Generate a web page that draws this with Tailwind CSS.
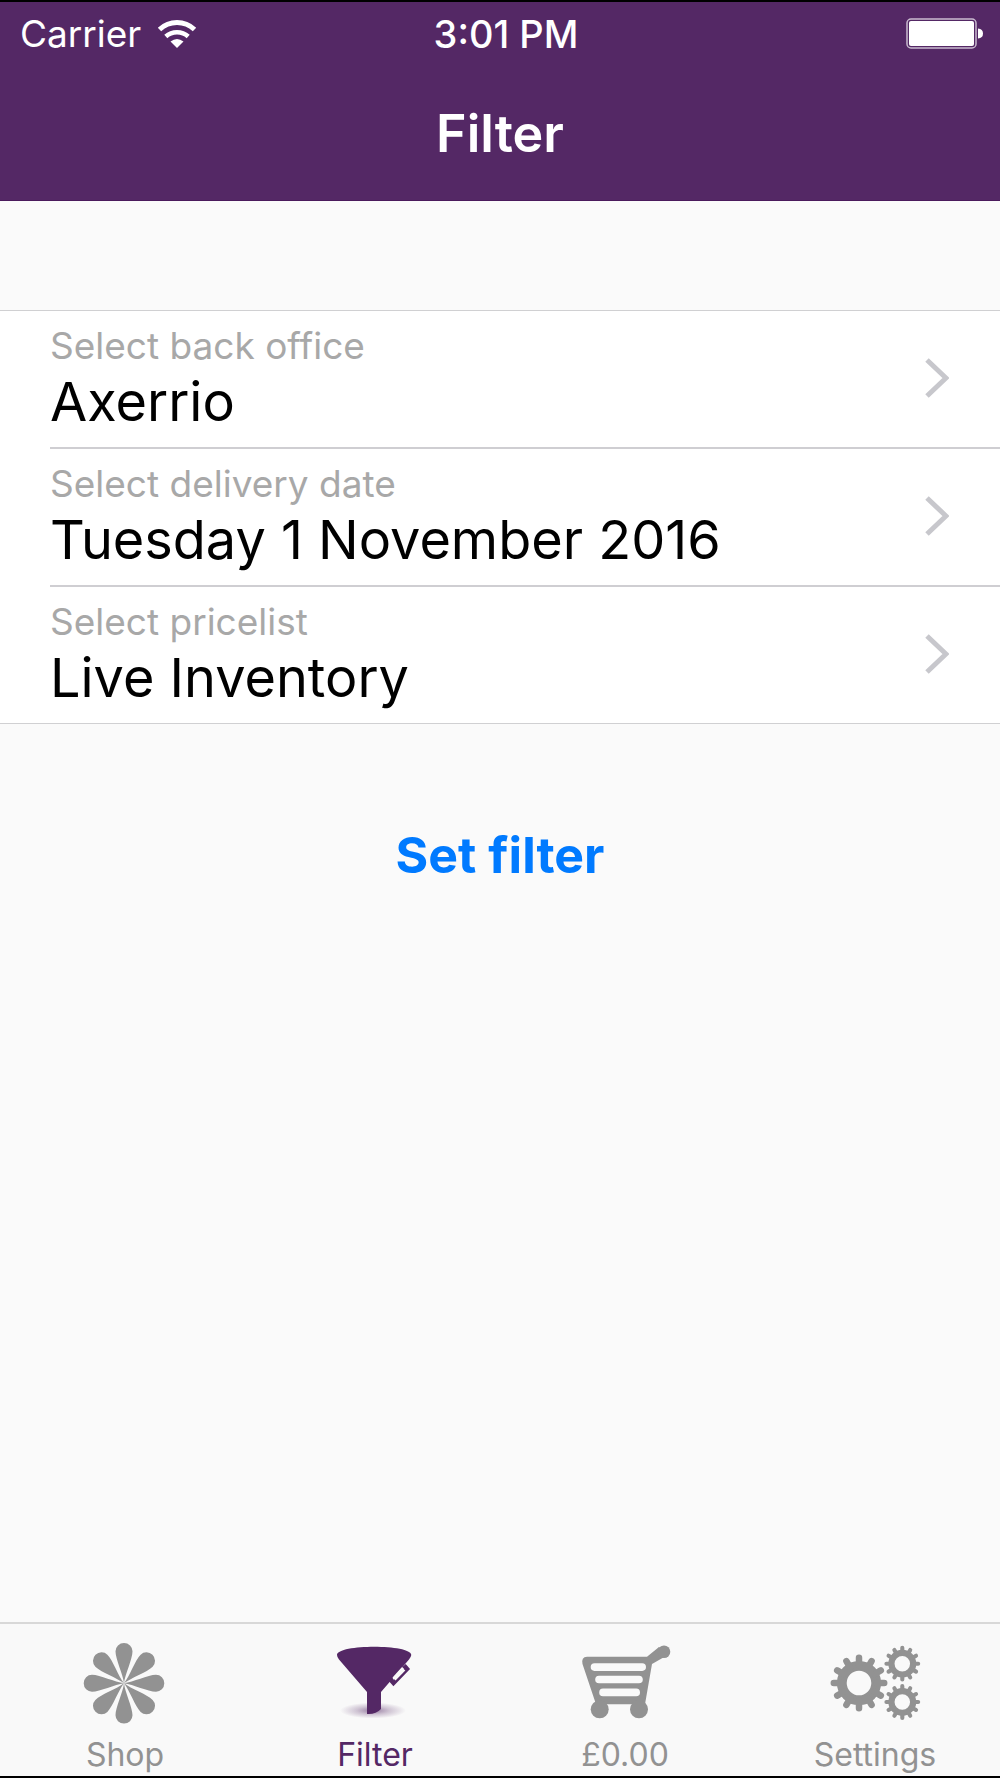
<!DOCTYPE html>
<html lang="en">
<head>
<meta charset="utf-8">
<meta name="viewport" content="width=device-width, initial-scale=1">
<title>Filter</title>
<script src="https://cdn.jsdelivr.net/npm/@tailwindcss/browser@4"></script>
</head>
<body class="flex min-h-screen flex-col border-y-2 border-black bg-[#fafafa] font-['Inter',sans-serif] text-black">
  <header class="border-b border-[#4a1a5c] bg-[#542865] text-white">
    <div class="grid h-16 grid-cols-3 items-center pl-5 pr-4">
      <div class="flex items-center gap-4">
        <span class="text-[37px] leading-10">Carrier</span>
        <svg class="h-[30px] w-10" viewBox="0 0 40 30" fill="none" stroke="white" stroke-width="5" aria-label="Wi-Fi">
          <path d="M2.5 10.5Q10 3.500 20 3.500T37.500 10.500"/>
          <path d="M8.800 17.500Q13.500 13.200 20 13.200T31.200 17.500" stroke-width="4.500"/>
          <path d="M13.500 22.500Q20 17.500 26.500 22.500L20 29Z" fill="white" stroke="none"/>
        </svg>
      </div>
      <time class="pl-2 text-center text-[38px] font-medium leading-10">3:01 PM</time>
      <svg class="h-8 w-[78px] justify-self-end" viewBox="0 0 78 32" aria-label="Battery full">
        <rect x="1" y="1" width="69" height="29" rx="4" fill="none" stroke="#c9bacf" stroke-width="1.500"/>
        <rect x="3" y="3" width="65" height="25" rx="2" fill="white"/>
        <path d="M72 10.500Q77 11 77 15.500T72 20.500Z" fill="white"/>
      </svg>
    </div>
    <h1 class="pt-0.5 text-center text-[52px] font-semibold leading-[132px]">Filter</h1>
  </header>

  <main class="flex-1 pt-[109px]">
    <div class="border-y border-[#d0d0d2] bg-white">
      <a href="#office" class="flex pl-[50px]">
        <span class="flex flex-1 items-center border-b-2 border-[#cfced2] pr-[51px]">
          <span class="flex-1 pb-[14px] pt-[10px]">
            <span class="block text-[37px] leading-[50px] text-[#a8a8a8]">Select back office</span>
            <span class="block text-[54px] leading-[62px]">Axerrio</span>
          </span>
          <svg class="h-[42px] w-6" viewBox="0 0 24 42" fill="none" stroke="#c7c7cc" stroke-width="5"><path d="M2 2L21 20L2 38"/></svg>
        </span>
      </a>
      <a href="#date" class="flex pl-[50px]">
        <span class="flex flex-1 items-center border-b-2 border-[#cfced2] pr-[51px]">
          <span class="flex-1 pb-[14px] pt-[10px]">
            <span class="block text-[37px] leading-[50px] text-[#a8a8a8]">Select delivery date</span>
            <span class="block text-[54px] leading-[62px]">Tuesday 1 November 2016</span>
          </span>
          <svg class="h-[42px] w-6" viewBox="0 0 24 42" fill="none" stroke="#c7c7cc" stroke-width="5"><path d="M2 2L21 20L2 38"/></svg>
        </span>
      </a>
      <a href="#pricelist" class="flex pl-[50px]">
        <span class="flex flex-1 items-center pr-[51px]">
          <span class="flex-1 pb-[14px] pt-[10px]">
            <span class="block text-[37px] leading-[50px] text-[#a8a8a8]">Select pricelist</span>
            <span class="block text-[54px] leading-[62px]">Live Inventory</span>
          </span>
          <svg class="h-[42px] w-6" viewBox="0 0 24 42" fill="none" stroke="#c7c7cc" stroke-width="5"><path d="M2 2L21 20L2 38"/></svg>
        </span>
      </a>
    </div>
    <div class="flex justify-center pt-[91px]">
      <button type="button" class="px-4 text-[50px] font-bold leading-20 text-[#007aff]">Set filter</button>
    </div>
  </main>

  <nav class="grid grid-cols-4 border-t-2 border-[#d8d8d8] bg-[#f9f9f9] pb-px pt-[11px] text-[32px] leading-10 text-[#929292]">
    <a href="#shop" class="flex flex-col items-center">
      <svg class="size-[100px]" viewBox="0 0 100 100" fill="#929292">
        <defs><path id="petal" d="M0 0C-1-9-8.500-24-8.500-32A8.500 8.300 0 0 1 8.500-32C8.500-24 1-9 0 0Z"/></defs>
        <g transform="translate(49 48.300)">
          <use href="#petal"/><use href="#petal" transform="rotate(45)"/><use href="#petal" transform="rotate(90)"/><use href="#petal" transform="rotate(135)"/>
          <use href="#petal" transform="rotate(180)"/><use href="#petal" transform="rotate(225)"/><use href="#petal" transform="rotate(270)"/><use href="#petal" transform="rotate(315)"/>
        </g>
      </svg>
      <span>Shop</span>
    </a>
    <a href="#filter" class="flex flex-col items-center text-[#542865]" aria-current="page">
      <svg class="size-[100px]" viewBox="0 0 100 100">
        <defs><radialGradient id="shade"><stop offset="0" stop-color="#542865" stop-opacity=".6"/><stop offset=".5" stop-color="#542865" stop-opacity=".25"/><stop offset="1" stop-color="#542865" stop-opacity="0"/></radialGradient></defs>
        <ellipse cx="48" cy="75.500" rx="33" ry="8" fill="url(#shade)"/>
        <path d="M12 20C12 9 86.300 9 86.300 20Q86 22 84 24.500L56 57V74Q51 79.500 42 79V57L14 24.500Q12 22 12 20Z" fill="#542865"/>
        <path d="M79 30.500L82 34L68.500 48L65.500 44.500" fill="none" stroke="#542865" stroke-width="4.500"/>
        <path d="M76.800 32.200L80.300 35.500L70.500 45.500L67.500 42.500Z" fill="#f9f9f9"/>
      </svg>
      <span>Filter</span>
    </a>
    <a href="#basket" class="flex flex-col items-center">
      <svg class="size-[100px]" viewBox="0 0 100 100" fill="#929292">
        <path fill-rule="evenodd" d="M12 21.700H72L84 12L91 21L77 29L70 69.300H21L7.500 29Q6 22 12 21.700ZM19.500 28.300a3.800 3.800 0 0 0 0 7.600H67.200a3.800 3.800 0 0 0 0-7.600ZM24 40.700a3.800 3.800 0 0 0 0 7.600H64a3.800 3.800 0 0 0 0-7.600ZM28 53.600a3.800 3.800 0 0 0 0 7.600H61.200a3.800 3.800 0 0 0 0-7.600Z"/>
        <circle cx="89" cy="16.700" r="6.300"/>
        <circle cx="24.700" cy="74.300" r="9"/><circle cx="64" cy="74.300" r="9"/>
      </svg>
      <span>£0.00</span>
    </a>
    <a href="#settings" class="flex flex-col items-center">
      <svg class="size-[100px]" viewBox="0 0 100 100" fill="none" stroke="#929292">
        <defs>
          <g id="gear">
            <circle r="17.200" stroke-width="9.800"/>
            <g stroke-width="6.500" stroke-linecap="round">
              <path d="M0-25.200V-18M0 25.200V18M-25.200 0H-18M25.200 0H18"/>
              <path d="M0-25.200V-18M0 25.200V18M-25.200 0H-18M25.200 0H18" transform="rotate(30)"/>
              <path d="M0-25.200V-18M0 25.200V18M-25.200 0H-18M25.200 0H18" transform="rotate(60)"/>
            </g>
          </g>
        </defs>
        <use href="#gear" transform="translate(34 48)"/>
        <use href="#gear" transform="translate(77.300 28.700) scale(.63)"/>
        <use href="#gear" transform="translate(77.300 67) scale(.63)"/>
      </svg>
      <span>Settings</span>
    </a>
  </nav>
</body>
</html>
